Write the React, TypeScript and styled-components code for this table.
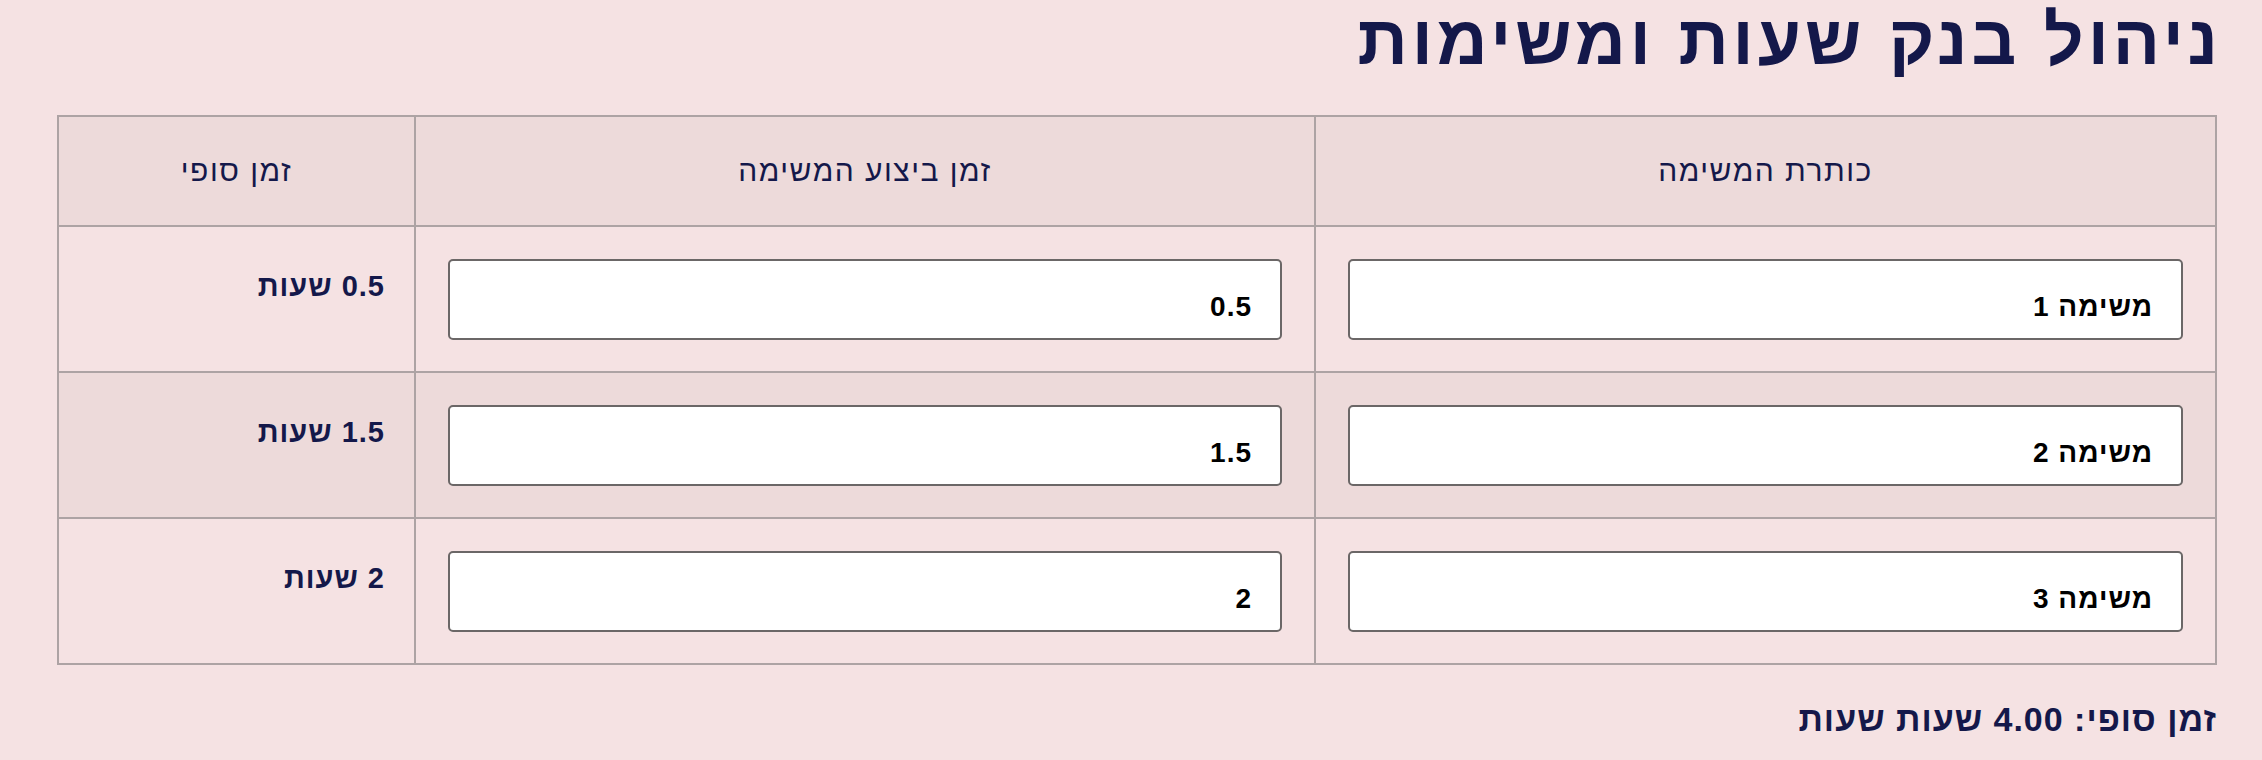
import { FC } from "react";
import styled, { createGlobalStyle } from "styled-components";

interface ITask {
	title: string;
	hours: number;
}

const tasks: ITask[] = [
	{ title: "משימה 1", hours: 0.5 },
	{ title: "משימה 2", hours: 1.5 },
	{ title: "משימה 3", hours: 2 },
];

const NAVY = "#14184a";
const BORDER = "#ada3a4";

const GlobalStyle = createGlobalStyle`
	html, body {
		margin: 0;
		padding: 0;
		background: #f5e2e3;
	}
	body {
		font-family: "Liberation Sans", "DejaVu Sans", sans-serif;
	}
`;

const App: FC = () => {
	const total = tasks.reduce((sum, t) => sum + t.hours, 0);

	return (
		<>
			<GlobalStyle />
			<SPage dir="rtl">
				<STitle>ניהול בנק שעות ומשימות</STitle>
				<STable>
					<colgroup>
						<col style={{ width: 901 }} />
						<col style={{ width: 900 }} />
						<col style={{ width: 357 }} />
					</colgroup>
					<thead>
						<tr>
							<SHeaderColumn>כותרת המשימה</SHeaderColumn>
							<SHeaderColumn>זמן ביצוע המשימה</SHeaderColumn>
							<SHeaderColumn>זמן סופי</SHeaderColumn>
						</tr>
					</thead>
					<tbody>
						{tasks.map((task, idx) => (
							<SRow key={idx} $striped={idx % 2 === 1}>
								<SColumn>
									<SInput defaultValue={task.title} />
								</SColumn>
								<SColumn>
									<SInput defaultValue={String(task.hours)} />
								</SColumn>
								<SColumn>
									<STotal>{task.hours} שעות</STotal>
								</SColumn>
							</SRow>
						))}
					</tbody>
				</STable>
				<SFooter>זמן סופי: {total.toFixed(2)} שעות שעות</SFooter>
			</SPage>
		</>
	);
};

export default App;

const SPage = styled.div`
	padding: 0 45px 20px 59px;
	color: ${NAVY};
`;

const STitle = styled.h1`
	margin: 0 -5px 35px 0;
	height: 80px;
	font-size: 70px;
	line-height: 80px;
	font-weight: 900;
	color: ${NAVY};
	text-align: right;
	letter-spacing: 4px;
`;

const STable = styled.table`
	width: 100%;
	border-collapse: collapse;
	table-layout: fixed;
	border: 2px solid ${BORDER};
`;

const SHeaderColumn = styled.th`
	height: 108px;
	padding: 0 16px;
	background: #eddada;
	border: 2px solid ${BORDER};
	font-size: 30px;
	font-weight: 400;
	letter-spacing: 1.5px;
	color: ${NAVY};
	text-align: center;
	vertical-align: middle;
`;

const SRow = styled.tr<{ $striped: boolean }>`
	background: ${({ $striped }) => ($striped ? "#eddada" : "transparent")};
`;

const SColumn = styled.td`
	padding: 32px 32px 31px;
	border: 2px solid ${BORDER};
	vertical-align: top;
`;

const SInput = styled.input`
	box-sizing: border-box;
	display: block;
	width: 100%;
	height: 81px;
	padding: 14px 28px 0;
	border: 2px solid #6b6767;
	border-radius: 5px;
	background: #fff;
	font-family: "Liberation Sans", "DejaVu Sans", sans-serif;
	font-size: 28px;
	font-weight: 700;
	letter-spacing: 1px;
	color: #000;
	text-align: right;
	direction: rtl;
	outline: none;
`;

const STotal = styled.div`
	padding-top: 11px;
	margin-right: -3px;
	font-size: 29px;
	font-weight: 700;
	line-height: 32px;
	letter-spacing: 1px;
	color: ${NAVY};
	text-align: right;
`;

const SFooter = styled.div`
	margin-top: 36px;
	font-size: 34px;
	font-weight: 700;
	line-height: 36px;
	letter-spacing: 1px;
	color: ${NAVY};
	text-align: right;
`;
